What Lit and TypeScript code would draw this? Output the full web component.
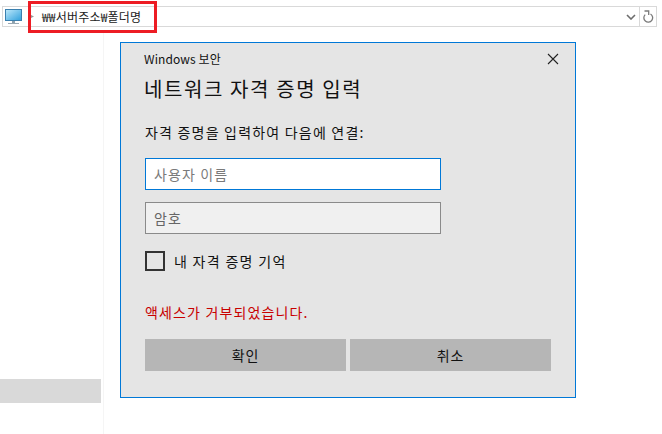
import { LitElement, html, css } from "lit";
import { customElement } from "lit/decorators.js";

@customElement("app-root")
export class AppRoot extends LitElement {
  static styles = css`
    :host {
      display: flex;
      flex-direction: column;
      position: relative;
      width: 662px;
      height: 434px;
      overflow: hidden;
      background: #fff;
      font-family: "Noto Sans CJK KR", "Noto Sans", sans-serif;
      color: #111;
    }
    .bar {
      display: flex;
      align-items: center;
      box-sizing: border-box;
      height: 21px;
      margin: 6px 5px 0 2px;
      border: 1px solid #d9d9d9;
      background: #fff;
    }
    .pc { margin-left: 2px; flex: none; }
    .crumb { margin-left: 8px; width: 3px; height: 3px; flex: none; }
    .path {
      margin-left: 8px;
      font-size: 12px;
      line-height: 18px;
      letter-spacing: 0.2px;
      color: #222;
      white-space: nowrap;
    }
    .chev { margin-left: auto; margin-right: 3px; flex: none; }
    .refresh {
      flex: none;
      box-sizing: border-box;
      width: 17px;
      height: 19px;
      border-left: 1px solid #d9d9d9;
      display: flex;
      align-items: center;
      justify-content: center;
    }
    .mark {
      position: absolute;
      left: 28px;
      top: 1px;
      box-sizing: border-box;
      width: 129px;
      height: 32px;
      border: 3px solid #ed1c24;
      pointer-events: none;
    }
    .body { flex: 1; display: flex; min-height: 0; margin-top: 6px; }
    .side {
      box-sizing: border-box;
      width: 104px;
      border-right: 1px solid #f5f5f5;
      padding: 346px 2px 0 0;
    }
    .row { height: 24px; background: #d9d9d9; }
    .dialog {
      position: absolute;
      left: 120px;
      top: 42px;
      box-sizing: border-box;
      width: 456px;
      height: 356px;
      background: #e5e5e5;
      border: 1px solid #0078d7;
      display: flex;
      flex-direction: column;
      padding: 0 24px;
    }
    .head {
      display: flex;
      align-items: center;
      justify-content: space-between;
      height: 30px;
      margin-top: 1px;
    }
    .win { font-size: 12px; line-height: 30px; letter-spacing: 0.1px; color: #111; margin-left: -1px; }
    .close { margin-right: -8px; }
    h1 {
      margin: 0 0 0 -1px;
      font-size: 20px;
      font-weight: 400;
      line-height: 30px;
      letter-spacing: 1.6px;
      color: #111;
    }
    .prompt {
      margin: 18px 0 0;
      font-size: 14px;
      line-height: 20px;
      letter-spacing: 1.2px;
    }
    .input {
      box-sizing: border-box;
      width: 296px;
      height: 32px;
      padding: 0 8px;
      font-size: 14px;
      line-height: 31px;
      letter-spacing: 1.1px;
      color: #7a7a7a;
    }
    .user {
      margin-top: 16px;
      background: #fff;
      border: 1px solid #0078d7;
    }
    .pass {
      margin-top: 12px;
      background: #f0f0f0;
      border: 1px solid #8a8a8a;
      color: #666;
    }
    .check {
      display: flex;
      align-items: center;
      gap: 9px;
      margin-top: 17px;
      font-size: 14px;
      line-height: 20px;
      letter-spacing: 1.3px;
    }
    .box {
      box-sizing: border-box;
      width: 20px;
      height: 20px;
      border: 2px solid #333;
      flex: none;
    }
    .err {
      margin: 31px 0 0;
      font-size: 14px;
      line-height: 20px;
      letter-spacing: 1.15px;
      color: #c80000;
    }
    .btns { display: flex; gap: 4px; margin-top: 17px; }
    .btn {
      width: 201px;
      height: 32px;
      background: #b6b6b6;
      text-align: center;
      font-size: 14px;
      line-height: 32px;
      letter-spacing: 0.9px;
      color: #111;
    }
  `;

  render() {
    return html`
      <div class="bar">
        <svg class="pc" width="18" height="16" viewBox="0 0 18 16">
          <defs>
            <linearGradient id="scr" x1="0" y1="0" x2="1" y2="1">
              <stop offset="0" stop-color="#bfe9fb" />
              <stop offset="1" stop-color="#2e9fdc" />
            </linearGradient>
          </defs>
          <rect x="0.5" y="0.5" width="16" height="11" fill="url(#scr)" stroke="#3a7fae" />
          <rect x="7" y="12" width="3" height="2" fill="#8fa3b0" />
          <rect x="3" y="14" width="11" height="1" fill="#9aa8b2" />
        </svg>
        <svg class="crumb" viewBox="0 0 3 3"><path d="M0 0l3 1.5L0 3z" fill="#9a9a9a" /></svg>
        <span class="path">₩₩서버주소₩폴더명</span>
        <svg class="chev" width="10" height="6" viewBox="0 0 10 6">
          <path d="M1 1l4 4 4-4" fill="none" stroke="#6d6d6d" stroke-width="1.6" />
        </svg>
        <div class="refresh">
          <svg width="11" height="13" viewBox="0 0 11 13">
            <path d="M2.2 3.6A4.4 4.4 0 1 0 7.5 3" fill="none" stroke="#7a7a7a" stroke-width="1.3" transform="translate(0 1)" />
            <path d="M1.5 1h4.2v4" fill="none" stroke="#7a7a7a" stroke-width="1.3" />
          </svg>
        </div>
      </div>
      <div class="body">
        <div class="side"><div class="row"></div></div>
      </div>
      <div class="mark"></div>
      <div class="dialog">
        <div class="head">
          <span class="win">Windows 보안</span>
          <svg class="close" width="12" height="12" viewBox="0 0 12 12">
            <path d="M1 1l10 10M11 1L1 11" stroke="#222" stroke-width="1.1" fill="none" />
          </svg>
        </div>
        <h1>네트워크 자격 증명 입력</h1>
        <p class="prompt">자격 증명을 입력하여 다음에 연결:</p>
        <div class="input user">사용자 이름</div>
        <div class="input pass">암호</div>
        <div class="check"><span class="box"></span><span>내 자격 증명 기억</span></div>
        <p class="err">액세스가 거부되었습니다.</p>
        <div class="btns">
          <div class="btn">확인</div>
          <div class="btn">취소</div>
        </div>
      </div>
    `;
  }
}
